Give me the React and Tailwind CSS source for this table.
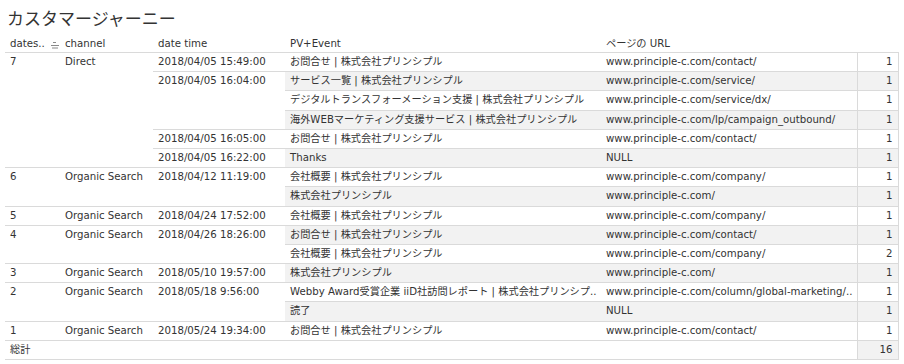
const groups = [
    {
        n: '7',
        ch: 'Direct',
        times: [
            { t: '2018/04/05 15:49:00', pages: [['お問合せ | 株式会社プリンシプル', 'www.principle-c.com/contact/', '1']] },
            {
                t: '2018/04/05 16:04:00',
                pages: [
                    ['サービス一覧 | 株式会社プリンシプル', 'www.principle-c.com/service/', '1'],
                    ['デジタルトランスフォーメーション支援 | 株式会社プリンシプル', 'www.principle-c.com/service/dx/', '1'],
                    ['海外WEBマーケティング支援サービス | 株式会社プリンシプル', 'www.principle-c.com/lp/campaign_outbound/', '1'],
                ],
            },
            { t: '2018/04/05 16:05:00', pages: [['お問合せ | 株式会社プリンシプル', 'www.principle-c.com/contact/', '1']] },
            { t: '2018/04/05 16:22:00', pages: [['Thanks', 'NULL', '1']] },
        ],
    },
    {
        n: '6',
        ch: 'Organic Search',
        times: [
            {
                t: '2018/04/12 11:19:00',
                pages: [
                    ['会社概要 | 株式会社プリンシプル', 'www.principle-c.com/company/', '1'],
                    ['株式会社プリンシプル', 'www.principle-c.com/', '1'],
                ],
            },
        ],
    },
    {
        n: '5',
        ch: 'Organic Search',
        times: [{ t: '2018/04/24 17:52:00', pages: [['会社概要 | 株式会社プリンシプル', 'www.principle-c.com/company/', '1']] }],
    },
    {
        n: '4',
        ch: 'Organic Search',
        times: [
            {
                t: '2018/04/26 18:26:00',
                pages: [
                    ['お問合せ | 株式会社プリンシプル', 'www.principle-c.com/contact/', '1'],
                    ['会社概要 | 株式会社プリンシプル', 'www.principle-c.com/company/', '2'],
                ],
            },
        ],
    },
    {
        n: '3',
        ch: 'Organic Search',
        times: [{ t: '2018/05/10 19:57:00', pages: [['株式会社プリンシプル', 'www.principle-c.com/', '1']] }],
    },
    {
        n: '2',
        ch: 'Organic Search',
        times: [
            {
                t: '2018/05/18 9:56:00',
                pages: [
                    ['Webby Award受賞企業 iiD社訪問レポート | 株式会社プリンシプ..', 'www.principle-c.com/column/global-marketing/..', '1'],
                    ['読了', 'NULL', '1'],
                ],
            },
        ],
    },
    {
        n: '1',
        ch: 'Organic Search',
        times: [{ t: '2018/05/24 19:34:00', pages: [['お問合せ | 株式会社プリンシプル', 'www.principle-c.com/contact/', '1']] }],
    },
];

// flatten into table rows with rowspans
const rows = [];
groups.forEach((g) => {
    const gSpan = g.times.reduce((s, t) => s + t.pages.length, 0);
    g.times.forEach((t, ti) => {
        t.pages.forEach((p, pi) => {
            rows.push({
                group: ti === 0 && pi === 0 ? { n: g.n, ch: g.ch, span: gSpan } : null,
                time: pi === 0 ? { t: t.t, span: t.pages.length } : null,
                page: p,
            });
        });
    });
});

const cell = 'border-t border-[#dadada] align-top px-[5px] py-0 leading-[18px] whitespace-nowrap overflow-hidden';
const head = 'px-[5px] pt-[2px] pb-0 font-normal text-left leading-[16px] whitespace-nowrap';

const SortIcon = () => (
    <svg width="9" height="8" viewBox="0 0 9 8" className="inline-block ml-[6px] mb-[-1px]">
        <line x1="2" y1="1.5" x2="5" y2="1.5" stroke="#8a8a8a" strokeWidth="1" />
        <line x1="0" y1="4.5" x2="8" y2="4.5" stroke="#8a8a8a" strokeWidth="1" />
        <line x1="1" y1="7" x2="7" y2="7" stroke="#8a8a8a" strokeWidth="1" />
    </svg>
);

export default function App() {
    return (
        <div
            className="w-[904px] h-[364px] bg-white text-[#333333] overflow-hidden"
            style={{ fontFamily: '"DejaVu Sans", "Noto Sans CJK JP", sans-serif' }}
        >
            <div className="h-[34px] pl-[7px] pt-[6px] text-[17px] leading-[24px] text-[#333333]" style={{ fontFamily: '"Noto Sans CJK JP", sans-serif' }}>
                カスタマージャーニー
            </div>
            <table className="ml-[5px] w-[893px] table-fixed border-collapse text-[10.2px]">
                <colgroup>
                    <col className="w-[55px]" />
                    <col className="w-[93px]" />
                    <col className="w-[132px]" />
                    <col className="w-[316px]" />
                    <col className="w-[256px]" />
                    <col className="w-[41px]" />
                </colgroup>
                <thead>
                    <tr className="h-[18px]">
                        <th className={head}>
                            dates..
                            <SortIcon />
                        </th>
                        <th className={head}>channel</th>
                        <th className={head}>date time</th>
                        <th className={head}>PV+Event</th>
                        <th className={head}>ページの URL</th>
                        <th></th>
                    </tr>
                </thead>
                <tbody>
                    {rows.map((r, i) => {
                        const band = i % 2 === 1 ? 'bg-[#f2f2f2]' : 'bg-white';
                        return (
                            <tr key={i} className="h-[19.2px]">
                                {r.group && (
                                    <>
                                        <td rowSpan={r.group.span} className={cell}>
                                            {r.group.n}
                                        </td>
                                        <td rowSpan={r.group.span} className={cell}>
                                            {r.group.ch}
                                        </td>
                                    </>
                                )}
                                {r.time && (
                                    <td rowSpan={r.time.span} className={cell}>
                                        {r.time.t}
                                    </td>
                                )}
                                <td className={`${cell} ${band}`}>{r.page[0]}</td>
                                <td className={`${cell} ${band}`}>{r.page[1]}</td>
                                <td className={`${cell} ${band} text-right border-x`}>{r.page[2]}</td>
                            </tr>
                        );
                    })}
                    <tr className="h-[19.2px]">
                        <td className={`${cell} border-b`}>総計</td>
                        <td className={`${cell} border-b`}></td>
                        <td className={`${cell} border-b`}></td>
                        <td className={`${cell} border-b`}></td>
                        <td className={`${cell} border-b`}></td>
                        <td className={`${cell} border-b border-x bg-[#f2f2f2] text-right`}>16</td>
                    </tr>
                </tbody>
            </table>
        </div>
    );
}
